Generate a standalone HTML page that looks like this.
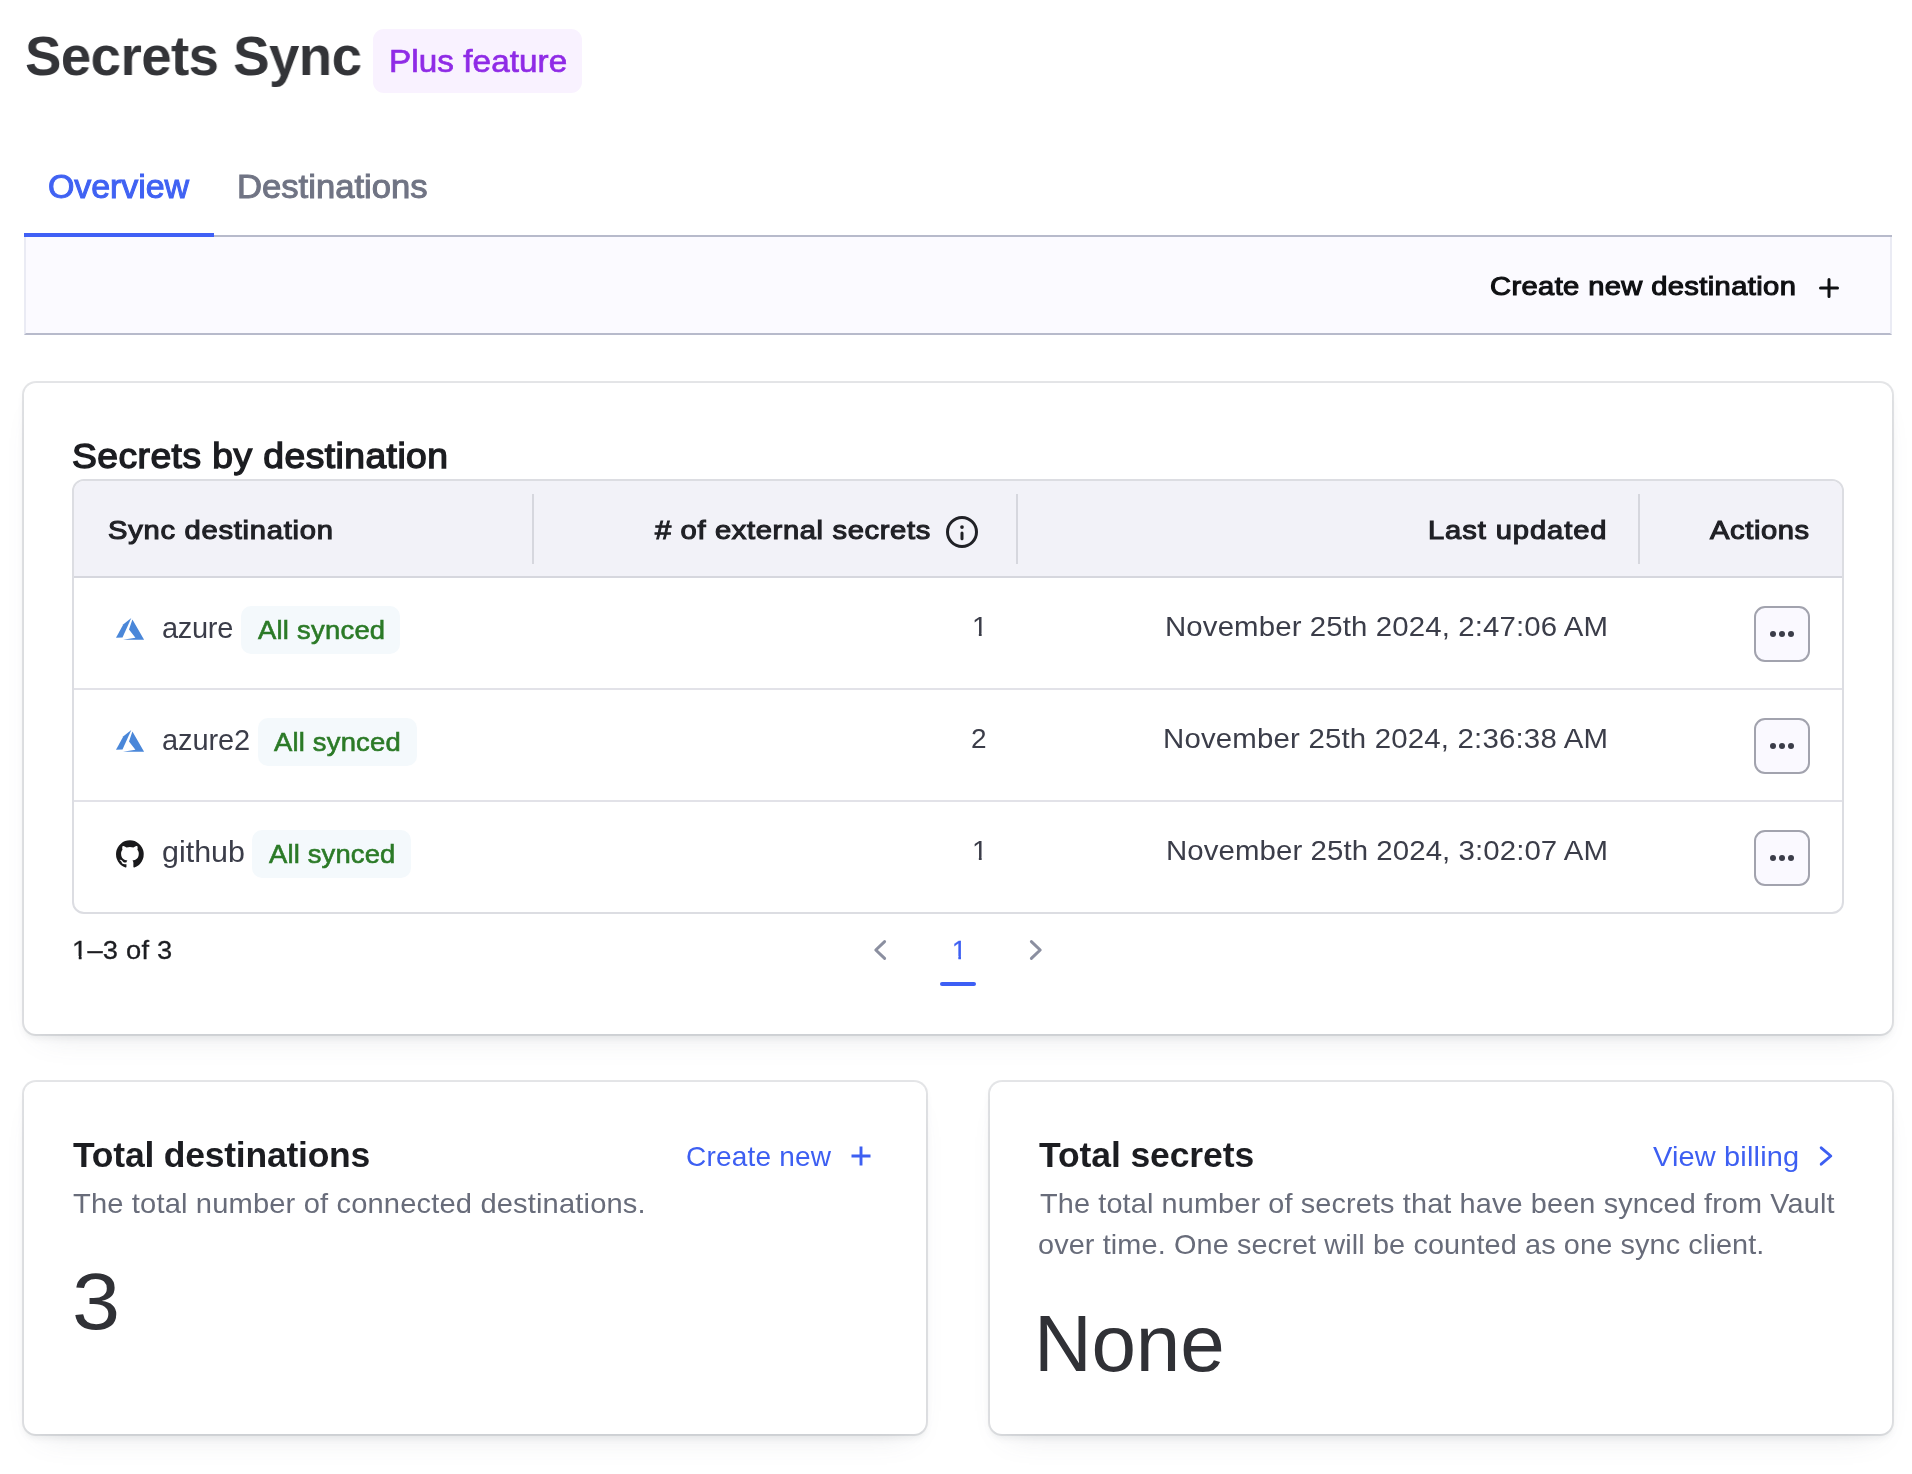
<!DOCTYPE html>
<html lang="en">
<head>
<meta charset="utf-8">
<title>Secrets Sync</title>
<style>
*{box-sizing:border-box;margin:0;padding:0}
html,body{width:1912px;height:1474px;overflow:hidden;background:#fff}
body{position:relative;font-family:"Liberation Sans",Arial,sans-serif;color:#3b3d45}
.t{position:absolute;white-space:nowrap;line-height:1;display:block;will-change:transform}
.box{position:absolute}
#plusbg{left:373px;top:29px;width:209px;height:64px;border-radius:11px;background:#f9f2ff}
#tabsline{left:24px;top:235px;width:1868px;height:2px;background:#b7bacb}
#tabind{left:24px;top:233px;width:190px;height:4px;background:#4060f5}
#toolbar{left:24px;top:237px;width:1868px;height:98px;background:#fbfaff;border-left:2px solid #eaebf4;border-right:2px solid #eaebf4;border-bottom:2px solid #b7bacb}
.card{position:absolute;background:#fff;border-radius:12px;box-shadow:0 0 0 2px rgba(101,106,118,.17),0 4px 6px rgba(101,106,118,.11),0 16px 32px -20px rgba(101,106,118,.22)}
#card1{left:24px;top:383px;width:1868px;height:651px}
#card2{left:24px;top:1082px;width:902px;height:352px}
#card3{left:990px;top:1082px;width:902px;height:352px}
#tbl{left:72px;top:479px;width:1772px;height:435px;border:2px solid #dcdde2;border-radius:12px;overflow:hidden;background:#fff}
#thead{left:0;top:0;width:1768px;height:97px;background:#f2f2f8;border-bottom:2px solid #d6d7de}
.vdiv{position:absolute;top:12.5px;width:2px;height:70px;background:#d6d7de}
.rline{position:absolute;left:0;width:1768px;height:2px;background:#e2e2e8}
.sbg{position:absolute;width:159px;height:47.5px;border-radius:10px;background:#f4f9fc}
.kebab{position:absolute;left:1754px;width:56px;height:56px;border:2px solid #a2a3ae;border-radius:11px;background:#faf9ff}
.kebab i{position:absolute;top:22.9px;width:6.2px;height:6.2px;border-radius:50%;background:#3b3d49}
#pund{left:940px;top:982px;width:36px;height:4px;border-radius:2px;background:#3d5ff5}
.one{display:inline-block;clip-path:polygon(0 0,100% 0,100% 73.5%,62% 73.5%,62% 100%,44% 100%,44% 73.5%,0 73.5%)}
svg{position:absolute;overflow:visible}
#title{left:24.70px;top:28.20px;font-size:56px;font-weight:700;color:#333438;letter-spacing:-0.565px;transform:scaleX(0.975);transform-origin:0 50%}
#plus{left:388.50px;top:45.00px;font-size:32px;font-weight:400;color:#8f2be6;letter-spacing:0.055px;transform:scaleX(1.04);transform-origin:0 50%;-webkit-text-stroke:0.7px #8f2be6}
#tab1{left:48.20px;top:169.75px;font-size:33px;font-weight:400;color:#4062f3;letter-spacing:-0.085px;transform:scaleX(1.03);transform-origin:0 50%;-webkit-text-stroke:1.0px #4062f3}
#tab2{left:237.35px;top:169.75px;font-size:33px;font-weight:400;color:#707484;letter-spacing:-0.010px;transform:scaleX(1.05);transform-origin:0 50%;-webkit-text-stroke:1.0px #707484}
#cnd{left:1490.40px;top:272.82px;font-size:26.5px;font-weight:400;color:#0f1013;letter-spacing:0.334px;transform:scaleX(1.1);transform-origin:0 50%;-webkit-text-stroke:1.1px #0f1013}
#h2{left:71.65px;top:438.82px;font-size:34.5px;font-weight:400;color:#1c1d21;letter-spacing:0.415px;transform:scaleX(1.08);transform-origin:0 50%;-webkit-text-stroke:1.35px #1c1d21}
#th1{left:107.50px;top:517.03px;font-size:26.5px;font-weight:400;color:#202126;letter-spacing:0.667px;transform:scaleX(1.1);transform-origin:0 50%;-webkit-text-stroke:1.1px #202126}
#th2{left:655.40px;top:517.03px;font-size:26.5px;font-weight:400;color:#202126;letter-spacing:0.580px;transform:scaleX(1.1);transform-origin:0 50%;-webkit-text-stroke:1.1px #202126}
#th3{left:1428.40px;top:517.03px;font-size:26.5px;font-weight:400;color:#202126;letter-spacing:0.819px;transform:scaleX(1.1);transform-origin:0 50%;-webkit-text-stroke:1.1px #202126}
#th4{left:1710.05px;top:517.03px;font-size:26.5px;font-weight:400;color:#202126;letter-spacing:0.533px;transform:scaleX(1.1);transform-origin:0 50%;-webkit-text-stroke:1.1px #202126}
#n1{left:161.80px;top:613.75px;font-size:29px;font-weight:400;color:#3b3d49;letter-spacing:-0.300px}
#n2{left:161.65px;top:725.75px;font-size:29px;font-weight:400;color:#3b3d49;letter-spacing:-0.120px}
#n3{left:161.75px;top:837.75px;font-size:29px;font-weight:400;color:#3b3d49;letter-spacing:0.000px;transform:scaleX(1.05);transform-origin:0 50%}
#b1{left:258.00px;top:617.40px;font-size:26px;font-weight:400;color:#2b7a27;letter-spacing:0.222px;transform:scaleX(1.055);transform-origin:0 50%;-webkit-text-stroke:0.6px #2b7a27}
#b2{left:273.80px;top:729.40px;font-size:26px;font-weight:400;color:#2b7a27;letter-spacing:0.178px;transform:scaleX(1.055);transform-origin:0 50%;-webkit-text-stroke:0.6px #2b7a27}
#b3{left:268.60px;top:841.40px;font-size:26px;font-weight:400;color:#2b7a27;letter-spacing:0.133px;transform:scaleX(1.055);transform-origin:0 50%;-webkit-text-stroke:0.6px #2b7a27}
#c1{left:972.45px;top:613.20px;font-size:28px;font-weight:400;color:#3b3d49;letter-spacing:0.000px}
#c2{left:970.65px;top:725.20px;font-size:28px;font-weight:400;color:#3b3d49;letter-spacing:0.000px}
#c3{left:972.45px;top:837.20px;font-size:28px;font-weight:400;color:#3b3d49;letter-spacing:0.000px}
#d1{left:1164.65px;top:613.20px;font-size:28px;font-weight:400;color:#3b3d49;letter-spacing:0.110px;transform:scaleX(1.05);transform-origin:0 50%}
#d2{left:1163.25px;top:725.20px;font-size:28px;font-weight:400;color:#3b3d49;letter-spacing:0.173px;transform:scaleX(1.05);transform-origin:0 50%}
#d3{left:1165.55px;top:837.20px;font-size:28px;font-weight:400;color:#3b3d49;letter-spacing:0.079px;transform:scaleX(1.05);transform-origin:0 50%}
#pinfo{left:71.70px;top:937.10px;font-size:26px;font-weight:400;color:#1c1d21;letter-spacing:0.200px;transform:scaleX(1.05);transform-origin:0 50%;-webkit-text-stroke:0.3px #1c1d21}
#pnum{left:952.20px;top:937.40px;font-size:26px;font-weight:400;color:#3d5ff2;letter-spacing:0.000px;-webkit-text-stroke:0.3px #3d5ff2}
#ct1{left:73.35px;top:1137.83px;font-size:35.5px;font-weight:700;color:#1c1d21;letter-spacing:-0.224px}
#cl1{left:685.70px;top:1143.40px;font-size:28px;font-weight:400;color:#3d5ff2;letter-spacing:0.200px}
#cd1{left:72.80px;top:1190.20px;font-size:28px;font-weight:400;color:#686c7a;letter-spacing:0.138px;transform:scaleX(1.04);transform-origin:0 50%}
#cv1{left:71.90px;top:1262.00px;font-size:80px;font-weight:400;color:#303136;letter-spacing:0.000px;transform:scaleX(1.08);transform-origin:0 50%}
#ct2{left:1038.90px;top:1137.83px;font-size:35.5px;font-weight:700;color:#1c1d21;letter-spacing:-0.101px}
#cl2{left:1652.90px;top:1143.20px;font-size:28px;font-weight:400;color:#3d5ff2;letter-spacing:0.146px;transform:scaleX(1.035);transform-origin:0 50%}
#cd2a{left:1039.80px;top:1190.20px;font-size:28px;font-weight:400;color:#686c7a;letter-spacing:0.130px;transform:scaleX(1.03);transform-origin:0 50%}
#cd2b{left:1038.10px;top:1231.20px;font-size:28px;font-weight:400;color:#686c7a;letter-spacing:0.115px;transform:scaleX(1.03);transform-origin:0 50%}
#cv2{left:1033.65px;top:1304.00px;font-size:80px;font-weight:400;color:#303136;letter-spacing:-0.200px}
</style>
</head>
<body>
<div class="box" id="plusbg"></div>
<h1><span class="t" id="title">Secrets Sync</span></h1>
<span class="t" id="plus">Plus feature</span>

<div class="box" id="tabsline"></div>
<div class="box" id="toolbar"></div>
<div class="box" id="tabind"></div>
<span class="t" id="tab1">Overview</span>
<span class="t" id="tab2">Destinations</span>
<span class="t" id="cnd">Create new destination</span>
<svg style="left:1816.5px;top:275.5px" width="24" height="24" viewBox="0 0 24 24"><path d="M12 3.5v17M3.5 12h17" stroke="#0f1013" stroke-width="3" stroke-linecap="round" fill="none"/></svg>

<div class="card" id="card1"></div>
<h2><span class="t" id="h2">Secrets by destination</span></h2>
<div class="box" id="tbl">
  <div class="box" id="thead">
    <div class="vdiv" style="left:457.5px"></div>
    <div class="vdiv" style="left:942px"></div>
    <div class="vdiv" style="left:1563.5px"></div>
  </div>
  <div class="rline" style="top:207px"></div>
  <div class="rline" style="top:319px"></div>
</div>
<span class="t" id="th1">Sync destination</span>
<span class="t" id="th2"># of external secrets</span>
<svg style="left:946px;top:516px" width="32" height="32" viewBox="0 0 16 16"><g fill="#202126"><circle cx="8" cy="5.55" r=".92"/><path d="M8 7.8a.75.75 0 01.75.75v2.8a.75.75 0 01-1.5 0v-2.8A.75.75 0 018 7.8z"/><path fill-rule="evenodd" d="M8 0a8 8 0 100 16A8 8 0 008 0zM1.5 8a6.5 6.5 0 1113 0 6.5 6.5 0 01-13 0z"/></g></svg>
<span class="t" id="th3">Last updated</span>
<span class="t" id="th4">Actions</span>

<svg style="left:108px;top:608px" width="44" height="40" viewBox="108 608 44 40"><polygon fill="#4a87d9" points="131.3,618.1 123.4,624.3 116.0,637.7 122.5,637.5"/><polygon fill="#4a87d9" points="132.4,619.6 144.1,639.7 123.0,639.7 135.4,637.7 129.0,629.4"/></svg>
<span class="t" id="n1">azure</span>
<div class="sbg" style="left:241px;top:606px"></div><span class="t" id="b1">All synced</span>
<span class="t" id="c1"><span class="one">1</span></span><span class="t" id="d1">November 25th 2024, 2:47:06 AM</span>
<div class="kebab" style="top:606px"><i style="left:13.9px"></i><i style="left:22.9px"></i><i style="left:31.9px"></i></div>

<svg style="left:108px;top:720px" width="44" height="40" viewBox="108 720 44 40"><polygon fill="#4a87d9" points="131.3,730.1 123.4,736.3 116.0,749.7 122.5,749.5"/><polygon fill="#4a87d9" points="132.4,731.6 144.1,751.7 123.0,751.7 135.4,749.7 129.0,741.4"/></svg>
<span class="t" id="n2">azure2</span>
<div class="sbg" style="left:257.5px;top:718px"></div><span class="t" id="b2">All synced</span>
<span class="t" id="c2">2</span><span class="t" id="d2">November 25th 2024, 2:36:38 AM</span>
<div class="kebab" style="top:718px"><i style="left:13.9px"></i><i style="left:22.9px"></i><i style="left:31.9px"></i></div>

<svg style="left:116px;top:839.7px" width="27.8" height="27.8" viewBox="0 0 16 16"><path fill="#1a1a1c" fill-rule="evenodd" d="M8 .2a8 8 0 0 0-2.53 15.59c.4.07.55-.17.55-.38l-.01-1.49c-2.01.37-2.53-.49-2.69-.94-.09-.23-.48-.94-.82-1.13-.28-.15-.68-.52-.01-.53.63-.01 1.08.58 1.23.82.72 1.21 1.87.87 2.33.66.07-.52.28-.87.51-1.07-1.78-.2-3.64-.89-3.64-3.95 0-.87.31-1.59.82-2.15-.08-.2-.36-1.02.08-2.12 0 0 .67-.21 2.2.82a7.42 7.42 0 0 1 4 0c1.53-1.04 2.2-.82 2.2-.82.44 1.1.16 1.92.08 2.12.51.56.82 1.27.82 2.15 0 3.07-1.87 3.75-3.65 3.95.29.25.54.73.54 1.48l-.01 2.2c0 .21.15.46.55.38A8.01 8.01 0 0 0 8 .2Z"/></svg>
<span class="t" id="n3">github</span>
<div class="sbg" style="left:252px;top:830px"></div><span class="t" id="b3">All synced</span>
<span class="t" id="c3"><span class="one">1</span></span><span class="t" id="d3">November 25th 2024, 3:02:07 AM</span>
<div class="kebab" style="top:830px"><i style="left:13.9px"></i><i style="left:22.9px"></i><i style="left:31.9px"></i></div>

<span class="t" id="pinfo"><span class="one">1</span>–3 of 3</span>
<svg style="left:868px;top:936px" width="24" height="28" viewBox="0 0 24 28"><path d="M16.6 5.6 7.8 14l8.8 8.4" fill="none" stroke="#8b8fa0" stroke-width="3" stroke-linecap="round" stroke-linejoin="round"/></svg>
<span class="t" id="pnum"><span class="one">1</span></span>
<div class="box" id="pund"></div>
<svg style="left:1024px;top:936px" width="24" height="28" viewBox="0 0 24 28"><path d="M7.4 5.6 16.2 14l-8.8 8.4" fill="none" stroke="#8b8fa0" stroke-width="3" stroke-linecap="round" stroke-linejoin="round"/></svg>

<div class="card" id="card2"></div>
<h3><span class="t" id="ct1">Total destinations</span></h3>
<span class="t" id="cl1">Create new</span>
<svg style="left:848.5px;top:1143.8px" width="24" height="24" viewBox="0 0 24 24"><path d="M12 2.5v19M2.5 12h19" stroke="#3d5ff2" stroke-width="2.9" fill="none"/></svg>
<span class="t" id="cd1">The total number of connected destinations.</span>
<span class="t" id="cv1">3</span>

<div class="card" id="card3"></div>
<h3><span class="t" id="ct2">Total secrets</span></h3>
<span class="t" id="cl2">View billing</span>
<svg style="left:1814px;top:1144.3px" width="24" height="24" viewBox="0 0 24 24"><path d="M7.2 3.8 16.8 12l-9.6 8.2" fill="none" stroke="#3d5ff2" stroke-width="2.9" stroke-linecap="round" stroke-linejoin="round"/></svg>
<span class="t" id="cd2a">The total number of secrets that have been synced from Vault</span>
<span class="t" id="cd2b">over time. One secret will be counted as one sync client.</span>
<span class="t" id="cv2">None</span>
</body>
</html>
